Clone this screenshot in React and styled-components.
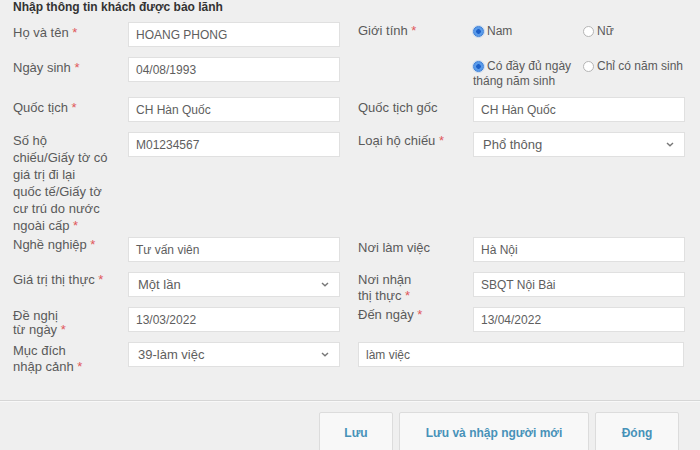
import React from "react";
import styled, { createGlobalStyle } from "styled-components";

const GlobalStyle = createGlobalStyle`
  html, body {
    margin: 0;
    background: #efefef;
  }
  body {
    font-family: "Liberation Sans", Arial, sans-serif;
  }
`;

const Page = styled.div`
  width: 700px;
  height: 450px;
  overflow: hidden;
  background: #efefef;
`;

const Section = styled.div`
  padding: 0 16px 0 13px;
`;

const Title = styled.div`
  font-size: 12px;
  line-height: 14px;
  font-weight: bold;
  color: #333;
  margin-bottom: 8px;
`;

const Form = styled.div`
  display: flex;
  flex-direction: column;
  gap: 10px;
`;

const Row = styled.div`
  display: flex;
  gap: 18px;
  height: ${p => p.$h || 25}px;
  align-items: flex-start;
`;

const Half = styled.div`
  display: grid;
  grid-template-columns: 115px 1fr;
  width: 327px;
  flex: none;
`;

const Label = styled.div`
  font-size: 13px;
  color: #5a5a5a;
  white-space: nowrap;
  padding-top: ${p => p.$pad ?? 3}px;
  line-height: ${p => p.$lh || 16}px;
`;

const Req = styled.span`
  color: #e0575b;
`;

const Input = styled.div`
  box-sizing: border-box;
  height: 25px;
  background: #fff;
  border: 1px solid #e0e0e0;
  padding: 0 7px;
  display: flex;
  align-items: center;
  font-size: 12px;
  color: #5e5e5e;
  width: ${p => (p.$w ? `${p.$w}px` : "auto")};
`;

const Select = styled(Input)`
  justify-content: space-between;
  padding: 0 10px 0 9px;
  font-size: 13px;
`;

const RadioGroup = styled.div`
  display: grid;
  grid-template-columns: 110px 1fr;
  padding-top: 2px;
  font-size: 12px;
  line-height: 15px;
  color: #5a5a5a;
`;

const Option = styled.div`
  white-space: ${p => (p.$nowrap ? "nowrap" : "normal")};
`;

const Dot = styled.span`
  display: inline-block;
  box-sizing: border-box;
  width: 11px;
  height: 11px;
  border-radius: 50%;
  margin-right: 3px;
  vertical-align: -2px;
  border: 1px solid ${p => (p.$on ? "#3a7fd8" : "#b5b5b5")};
  background: ${p =>
    p.$on ? "radial-gradient(circle, #1b5fc8 0 2px, #5a9bea 2.6px)" : "#fff"};
  box-shadow: ${p => (p.$on ? "0 0 0 1px rgba(90,155,234,0.25)" : "none")};
`;

const Footer = styled.div`
  margin-top: 33px;
  border-top: 1px solid #d6d6d6;
  box-shadow: inset 0 1px 0 #f8f8f8;
  padding: 11px 21px 0 0;
  display: flex;
  justify-content: flex-end;
  gap: 6px;
`;

const Button = styled.button`
  box-sizing: border-box;
  width: ${p => p.$w}px;
  height: 44px;
  padding: 0 0 3px;
  background: #f8f8f8;
  border: 1px solid #dcdcdc;
  border-radius: 2px;
  font-family: inherit;
  font-size: 12px;
  font-weight: bold;
  color: #4792b8;
`;

const Chevron = () => (
  <svg width="8" height="5" viewBox="0 0 8 5">
    <path d="M1 1l3 2.8L7 1" fill="none" stroke="#777" strokeWidth="1.4" />
  </svg>
);

const Field = ({ label, req, value, select, lh, pad }) => (
  <Half>
    <Label $lh={lh} $pad={pad}>
      {label}
      {req && <Req> *</Req>}
    </Label>
    {select ? (
      <Select>
        <span>{value}</span>
        <Chevron />
      </Select>
    ) : (
      <Input>{value}</Input>
    )}
  </Half>
);

const Radio = ({ on, nowrap, children }) => (
  <Option $nowrap={nowrap}>
    <Dot $on={on} />
    {children}
  </Option>
);

export default function App() {
  return (
    <Page>
      <GlobalStyle />
      <Section>
        <Title>Nhập thông tin khách được bảo lãnh</Title>
        <Form>
          <Row>
            <Field label="Họ và tên" req value="HOANG PHONG" />
            <Half>
              <Label $pad={1}>
                Giới tính<Req> *</Req>
              </Label>
              <RadioGroup>
                <Radio on nowrap>Nam</Radio>
                <Radio nowrap>Nữ</Radio>
              </RadioGroup>
            </Half>
          </Row>
          <Row $h={30}>
            <Field label="Ngày sinh" req value="04/08/1993" />
            <Half>
              <span />
              <RadioGroup>
                <Radio on>Có đầy đủ ngày tháng năm sinh</Radio>
                <Radio nowrap>Chỉ có năm sinh</Radio>
              </RadioGroup>
            </Half>
          </Row>
          <Row>
            <Field label="Quốc tịch" req value="CH Hàn Quốc" />
            <Field label="Quốc tịch gốc" value="CH Hàn Quốc" />
          </Row>
          <Row $h={95}>
            <Field
              pad={0}
              lh={17}
              label={
                <>
                  Số hộ
                  <br />
                  chiếu/Giấy tờ có
                  <br />
                  giá trị đi lại
                  <br />
                  quốc tế/Giấy tờ
                  <br />
                  cư trú do nước
                  <br />
                  ngoài cấp
                </>
              }
              req
              value="M01234567"
            />
            <Field label="Loại hộ chiếu" req value="Phổ thông" select pad={1} />
          </Row>
          <Row>
            <Field label="Nghề nghiệp" req value="Tư vấn viên" pad={0} lh={15} />
            <Field label="Nơi làm việc" value="Hà Nội" />
          </Row>
          <Row>
            <Field label="Giá trị thị thực" req value="Một lần" select pad={0} />
            <Field
              label={
                <>
                  Nơi nhận
                  <br />
                  thị thực
                </>
              }
              req
              value="SBQT Nội Bài"
              pad={0}
            />
          </Row>
          <Row>
            <Field
              label={
                <>
                  Đề nghị
                  <br />
                  từ ngày
                </>
              }
              req
              value="13/03/2022"
              pad={2}
              lh={14}
            />
            <Field label="Đến ngày" req value="13/04/2022" pad={0} />
          </Row>
          <Row>
            <Field
              label={
                <>
                  Mục đích
                  <br />
                  nhập cảnh
                </>
              }
              req
              value="39-làm việc"
              select
              pad={1}
            />
            <Input $w={327}>làm việc</Input>
          </Row>
        </Form>
      </Section>
      <Footer>
        <Button $w={74}>Lưu</Button>
        <Button $w={190}>Lưu và nhập người mới</Button>
        <Button $w={84}>Đóng</Button>
      </Footer>
    </Page>
  );
}
